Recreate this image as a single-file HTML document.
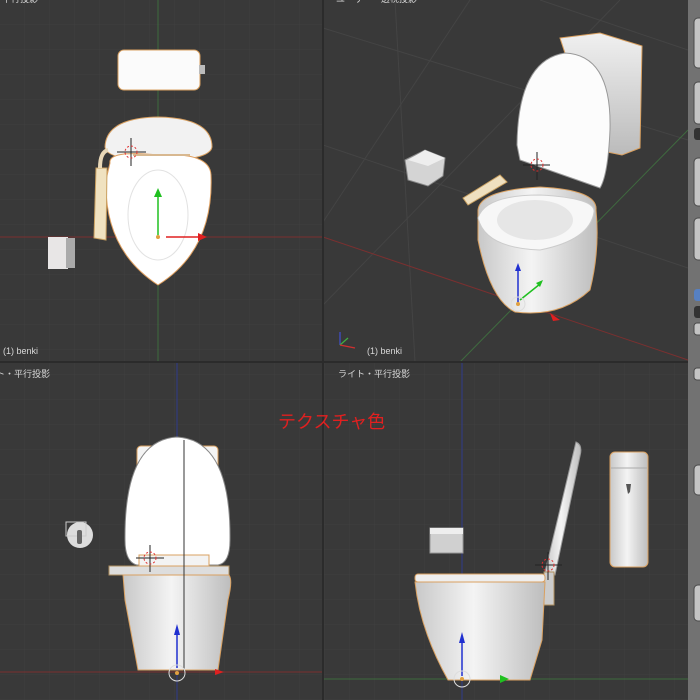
<!DOCTYPE html>
<html><head><meta charset="utf-8"><style>
html,body{margin:0;padding:0;background:#393939;width:700px;height:700px;overflow:hidden}
svg{display:block}
text{font-family:"Liberation Sans","Noto Sans CJK JP",sans-serif}
</style></head><body>
<svg width="700" height="700" viewBox="0 0 700 700" xmlns="http://www.w3.org/2000/svg">
<defs>
<pattern id="g" width="25" height="25" patternUnits="userSpaceOnUse"><path d="M25 0V25H0" fill="none" stroke="#404040" stroke-width="1"/></pattern>
<linearGradient id="bw" x1="0" x2="1"><stop offset="0" stop-color="#c8c8c8"/><stop offset=".45" stop-color="#f4f4f4"/><stop offset="1" stop-color="#bdbdbd"/></linearGradient>
<linearGradient id="bv" x1="0" y1="0" x2="0" y2="1"><stop offset="0" stop-color="#f0f0f0"/><stop offset="1" stop-color="#bbb"/></linearGradient>
</defs>
<rect width="700" height="700" fill="#393939"/>
<rect x="0" y="0" width="323" height="362" fill="url(#g)"/>
<rect x="0" y="362" width="323" height="338" fill="url(#g)"/>
<rect x="323" y="362" width="365" height="338" fill="url(#g)"/>
<g stroke="#444" stroke-width="1">
<line x1="323" y1="28" x2="688" y2="140"/><line x1="323" y1="145" x2="688" y2="268"/>
<line x1="323" y1="222" x2="470" y2="0"/><line x1="323" y1="305" x2="620" y2="0"/>
<line x1="395" y1="0" x2="415" y2="362"/><line x1="540" y1="0" x2="688" y2="50"/>
</g>
<line x1="460" y1="362" x2="688" y2="130" stroke="#3f6a3f"/>
<line x1="323" y1="237" x2="688" y2="360" stroke="#7a3030"/>
<line x1="158" y1="0" x2="158" y2="362" stroke="#3d6b3d"/>
<line x1="0" y1="237" x2="323" y2="237" stroke="#7a3030"/>
<line x1="177" y1="362" x2="177" y2="700" stroke="#303a8a"/>
<line x1="0" y1="672" x2="323" y2="672" stroke="#7a3030"/>
<line x1="462" y1="362" x2="462" y2="700" stroke="#303a8a"/>
<line x1="323" y1="679" x2="688" y2="679" stroke="#3d6b3d"/>
<rect x="322" y="0" width="2" height="700" fill="#2b2b2b"/>
<rect x="0" y="361" width="688" height="2" fill="#2b2b2b"/>
<rect x="688" y="0" width="12" height="700" fill="#727272"/>
<g fill="#c4c4c4" stroke="#4a4a4a">
<rect x="694" y="18" width="10" height="50" rx="4"/><rect x="694" y="82" width="10" height="42" rx="4"/>
<rect x="694" y="158" width="10" height="48" rx="4"/><rect x="694" y="218" width="10" height="42" rx="4"/>
<rect x="694" y="323" width="10" height="12" rx="3"/><rect x="694" y="368" width="10" height="12" rx="3"/>
<rect x="694" y="465" width="10" height="30" rx="4"/><rect x="694" y="585" width="10" height="36" rx="4"/>
</g>
<rect x="694" y="289" width="10" height="12" rx="3" fill="#5680c2"/>
<rect x="694" y="128" width="10" height="12" rx="3" fill="#333"/>
<rect x="694" y="306" width="10" height="12" rx="3" fill="#333"/>
<g fill="#d8d8d8" font-size="9">
<text x="2" y="2">平行投影</text>
<text x="336" y="2">ユーザー・透視投影</text>
<text x="3" y="354">(1) benki</text>
<text x="367" y="354">(1) benki</text>
<text x="-4" y="377">ト・平行投影</text>
<text x="338" y="377">ライト・平行投影</text>
</g>
<text x="278" y="428" fill="#e02020" font-size="18">テクスチャ色</text>
<g stroke-width="1.2" fill="none"><line x1="340" y1="345" x2="340" y2="332" stroke="#4050d0"/><line x1="340" y1="345" x2="348" y2="338" stroke="#40b040"/><line x1="340" y1="345" x2="355" y2="348" stroke="#d03030"/></g>

<!-- TOP LEFT -->
<rect x="118" y="50" width="82" height="40" rx="6" fill="#fbfbfb" stroke="#d9a060"/>
<rect x="199" y="65" width="6" height="9" fill="#bbb"/>
<path d="M105 147 Q106 118 158 117 Q212 118 212 147 Q210 160 158 161 Q106 160 105 147Z" fill="#f2f2f2" stroke="#d9a060"/>
<path d="M110 163 Q108 150 158 155 Q210 152 211 175 Q214 250 158 285 Q104 250 106 180Z" fill="#ffffff" stroke="#e0a060"/>
<ellipse cx="158" cy="215" rx="30" ry="45" fill="none" stroke="#e2e2e2"/>
<path d="M96 168 L107 168 L106 240 L94 238Z" fill="#f0e2c0" stroke="#caa060"/>
<path d="M100 168 Q100 152 108 150" stroke="#e9d8b8" stroke-width="4" fill="none"/>
<line x1="133" y1="155" x2="190" y2="155" stroke="#d8b890" stroke-width="2"/>
<rect x="48" y="237" width="20" height="32" fill="#e8e6e6"/><rect x="66" y="238" width="9" height="30" fill="#aaa"/>
<line x1="158" y1="235" x2="158" y2="195" stroke="#20c020" stroke-width="1.5"/><path d="M154 197 L158 188 L162 197Z" fill="#20c020"/>
<line x1="166" y1="237" x2="200" y2="237" stroke="#e02020" stroke-width="1.5"/><path d="M198 233 L207 237 L198 241Z" fill="#e02020"/>
<circle cx="158" cy="237" r="2" fill="#e0a040"/>
<g stroke="#222" stroke-width="1"><line x1="117" y1="152" x2="146" y2="152"/><line x1="131" y1="138" x2="131" y2="166"/></g>
<circle cx="131" cy="152" r="6" fill="none" stroke="#e03030" stroke-dasharray="2 2"/>

<!-- TOP RIGHT -->
<path d="M560 38 L600 33 L642 46 L640 148 L622 155 L597 150Z" fill="url(#bv)" stroke="#d9a060"/>
<path d="M517 145 Q518 60 565 53 Q612 55 610 130 Q608 175 600 188 L520 160Z" fill="#fcfcfc" stroke="#999"/>
<path d="M478 210 Q480 190 540 187 Q598 190 596 210 Q600 250 590 290 Q560 318 515 312 Q490 300 478 240Z" fill="url(#bw)" stroke="#d9a060"/>
<path d="M478 218 Q485 195 540 195 Q596 198 594 212 Q590 240 540 250 Q485 248 478 218Z" fill="#f7f7f7" stroke="#ccc"/>
<ellipse cx="535" cy="220" rx="38" ry="20" fill="#e6e6e6"/>
<path d="M463 198 L500 175 L507 182 L468 205Z" fill="#efe0c0" stroke="#c9a060"/>
<path d="M405 160 L425 150 L445 158 L443 176 L428 186 L408 180Z" fill="#d4d4d4" stroke="#888"/>
<path d="M408 160 L425 150 L445 158 L428 166Z" fill="#eee"/>
<line x1="518" y1="305" x2="518" y2="268" stroke="#2030d0" stroke-width="1.5"/><path d="M515 271 L518 263 L521 271Z" fill="#2030d0"/>
<line x1="520" y1="300" x2="540" y2="284" stroke="#20c020" stroke-width="1.5"/><path d="M536 283 L543 280 L540 287Z" fill="#20c020"/>
<path d="M550 313 L560 320 L553 321Z" fill="#e02020"/>
<circle cx="518" cy="304" r="7" fill="none" stroke="#ddd"/><circle cx="518" cy="304" r="2" fill="#e0a040"/>
<g stroke="#222"><line x1="523" y1="165" x2="550" y2="165"/><line x1="537" y1="152" x2="537" y2="180"/></g>
<circle cx="537" cy="165" r="6" fill="none" stroke="#e03030" stroke-dasharray="2 2"/>

<!-- BOTTOM LEFT -->
<rect x="137" y="446" width="81" height="30" rx="4" fill="#f4f4f4" stroke="#d9a060"/>
<path d="M125 540 Q124 440 177 437 Q231 440 230 540 Q230 563 218 565 L137 565 Q125 562 125 540Z" fill="#ffffff" stroke="#888"/>
<rect x="109" y="566" width="120" height="9" fill="#ddd" stroke="#b09060"/>
<path d="M123 575 L229 575 Q233 580 228 600 L218 670 L138 670 L125 600Z" fill="url(#bw)" stroke="#d9a060"/>
<rect x="139" y="555" width="70" height="11" fill="#f3f3f3" stroke="#d9a060"/>
<circle cx="80" cy="535" r="13" fill="#ddd"/><rect x="66" y="522" width="20" height="14" fill="none" stroke="#ccc"/><rect x="77" y="530" width="5" height="14" rx="2" fill="#666"/>
<line x1="184" y1="440" x2="184" y2="672" stroke="#333"/>
<line x1="177" y1="668" x2="177" y2="632" stroke="#2030d0" stroke-width="1.5"/><path d="M174 635 L177 624 L180 635Z" fill="#2030d0"/>
<path d="M215 669 L224 672 L215 675Z" fill="#e02020"/>
<circle cx="177" cy="673" r="8" fill="none" stroke="#ddd"/><circle cx="177" cy="673" r="2" fill="#e0a040"/>
<g stroke="#222"><line x1="136" y1="558" x2="164" y2="558"/><line x1="150" y1="545" x2="150" y2="572"/></g>
<circle cx="150" cy="558" r="6" fill="none" stroke="#e03030" stroke-dasharray="2 2"/>

<!-- BOTTOM RIGHT -->
<rect x="610" y="452" width="38" height="115" rx="5" fill="url(#bw)" stroke="#d9a060"/>
<line x1="611" y1="468" x2="647" y2="468" stroke="#aaa"/>
<path d="M626 484 L631 484 L630 492 L628 494Z" fill="#555"/>
<path d="M576 442 Q583 445 580 456 L555 575 L545 572 Z" fill="url(#bw)" stroke="#999"/>
<rect x="544" y="572" width="10" height="33" fill="#ccc" stroke="#b09060"/>
<rect x="415" y="574" width="130" height="8" rx="3" fill="#eee" stroke="#d9a060"/>
<path d="M415 582 L545 582 L542 640 L530 680 L448 680 Q420 630 415 582Z" fill="url(#bw)" stroke="#d9a060"/>
<rect x="430" y="528" width="33" height="25" fill="#d0d0d0" stroke="#999"/><rect x="430" y="528" width="33" height="6" fill="#eee"/>
<line x1="462" y1="676" x2="462" y2="640" stroke="#2030d0" stroke-width="1.5"/><path d="M459 643 L462 632 L465 643Z" fill="#2030d0"/>
<path d="M500 675 L509 679 L500 683Z" fill="#20c020"/>
<circle cx="462" cy="679" r="8" fill="none" stroke="#ddd"/><circle cx="462" cy="679" r="2" fill="#e0a040"/>
<g stroke="#222"><line x1="535" y1="565" x2="562" y2="565"/><line x1="548" y1="552" x2="548" y2="580"/></g>
<circle cx="548" cy="565" r="6" fill="none" stroke="#e03030" stroke-dasharray="2 2"/>
</svg>
</body></html>
